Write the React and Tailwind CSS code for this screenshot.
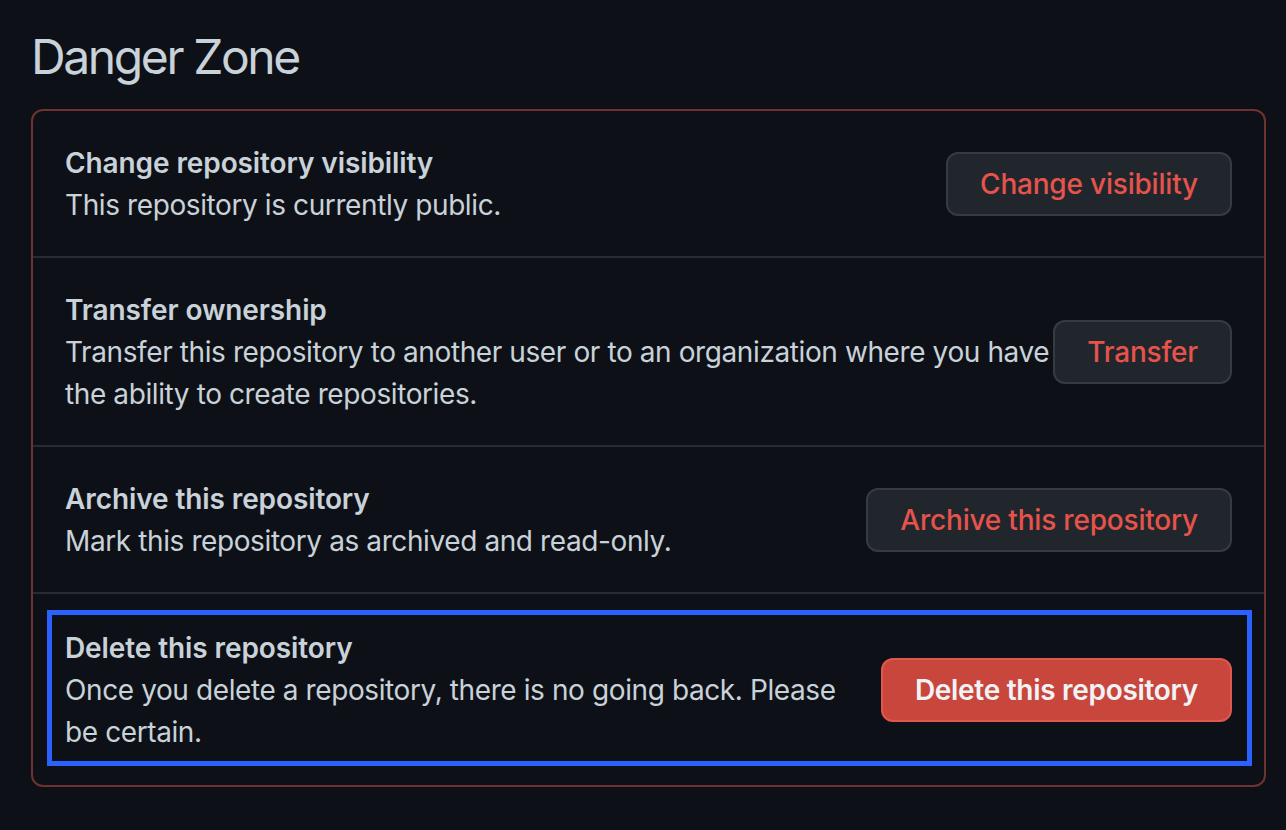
import React from 'react'

const rows = [
  {
    title: 'Change repository visibility',
    desc: 'This repository is currently public.',
    button: 'Change visibility',
  },
  {
    title: 'Transfer ownership',
    desc: 'Transfer this repository to another user or to an organization where you have the ability to create repositories.',
    button: 'Transfer',
  },
  {
    title: 'Archive this repository',
    desc: 'Mark this repository as archived and read-only.',
    button: 'Archive this repository',
  },
]

const Row = ({ title, desc, button, first }) => (
  <div className={"flex items-center px-8 py-[30.5px] " + (first ? "" : "border-t-2 border-[#272b33]")}>
    <div className="flex-1 min-w-0">
      <div className="font-semibold tracking-[-0.1px]">{title}</div>
      <div className="tracking-[-0.4px]">{desc}</div>
    </div>
    <button className="shrink-0 ml-[2px] h-[64px] px-8 rounded-[12px] bg-[#21262d] border-2 border-[#363b42] text-[#e5534b] font-medium tracking-[-0.2px]">
      {button}
    </button>
  </div>
)

const App = () => {
  return (
    <div className="min-h-screen bg-[#0d1117] text-[#c9d1d9] font-['Inter','Noto_Sans',sans-serif] text-[28px] leading-[42px]">
      <div className="pl-[31px] pt-[21px] w-[1266px]">
        <h2 className="text-[48px] leading-[72px] font-normal tracking-[-2.4px]">Danger Zone</h2>
        <div className="mt-4 border-2 border-[#6e3330] rounded-[12px]">
          {rows.map((r, i) => (
            <Row key={r.title} {...r} first={i === 0} />
          ))}
          <div className="relative flex items-center px-8 py-[32.5px] border-t-2 border-[#272b33]">
            <div className="flex-1 min-w-0">
              <div className="font-semibold tracking-[-0.1px]">Delete this repository</div>
              <div className="max-w-[790px] tracking-[-0.4px]">Once you delete a repository, there is no going back. Please be certain.</div>
            </div>
            <button className="shrink-0 h-[64px] px-8 rounded-[12px] bg-[#c9463d] border-2 border-[#e0574e] text-[#f0f3f6] font-semibold tracking-[-0.3px]">
              Delete this repository
            </button>
            <div className="absolute left-[14px] top-[16px] right-[12px] bottom-[19px] border-[5px] border-[#2962ff] pointer-events-none"></div>
          </div>
        </div>
      </div>
    </div>
  )
}

export default App
